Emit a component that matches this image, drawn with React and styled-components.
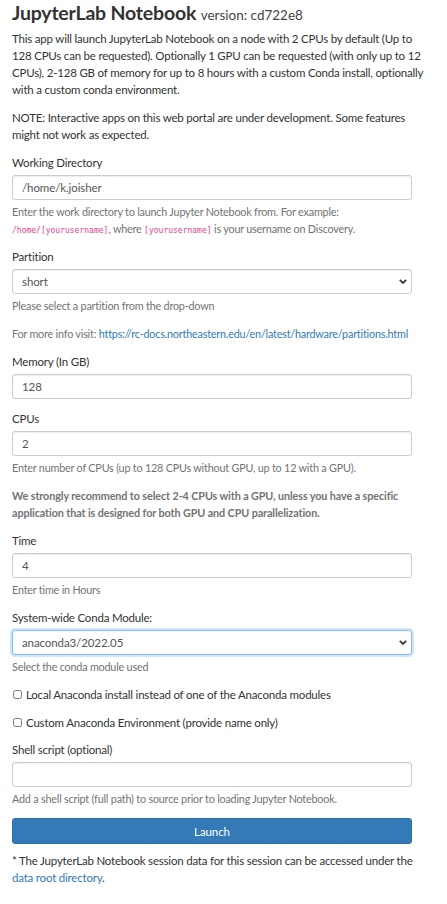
import styled, { createGlobalStyle, css } from "styled-components";

const GlobalStyle = createGlobalStyle`
  html, body { margin: 0; padding: 0; background: #fff; }
  body {
    font-family: Lato, "Open Sans", sans-serif;
    font-size: 11.5px;
    letter-spacing: -0.2px;
    line-height: 17px;
    color: #333;
  }
  * { box-sizing: border-box; }
`;

const Page = styled.div`
  width: 447px;
  padding: 0 35px 20px 12px;
`;

const Title = styled.h3`
  margin: 0 0 2px;
  font-size: 19.5px;
  line-height: 26px;
  font-weight: 700;
  letter-spacing: -0.2px;
  color: #333;
  small {
    font-size: 13.5px;
    font-weight: 400;
    letter-spacing: 0;
    color: #444;
  }
`;

const Para = styled.p`
  margin: 0 0 11px;
  white-space: nowrap;
`;

const Group = styled.div`
  margin-bottom: 11px;
`;

const Label = styled.label`
  display: block;
  margin-bottom: 4px;
`;

const fieldBase = css`
  display: block;
  width: 400px;
  height: 25px;
  padding: 0 9px;
  font-family: inherit;
  font-size: 11.5px;
  letter-spacing: -0.1px;
  color: #555;
  background: #fff;
  border: 1px solid #ccc;
  border-radius: 3px;
  box-shadow: inset 0 1px 1px rgba(0, 0, 0, 0.075);
  outline: none;
`;

const Input = styled.input`
  ${fieldBase}
`;

const SelectWrap = styled.div`
  position: relative;
  width: 400px;
  svg {
    position: absolute;
    right: 5px;
    top: 10px;
    pointer-events: none;
  }
`;

const Select = styled.select`
  ${fieldBase}
  appearance: none;
  ${({ $focus }) =>
    $focus &&
    css`
      border-color: #80bdff;
      box-shadow: 0 0 0 2px rgba(128, 180, 230, 0.35);
    `}
`;

const Help = styled.p`
  margin: ${({ $spaced }) => ($spaced ? "11px" : "3px")} 0 0;
  font-size: 10.8px;
  letter-spacing: ${({ $bold }) => ($bold ? "-0.1px" : "-0.2px")};
  white-space: nowrap;
  color: #737373;
  font-weight: ${({ $bold }) => ($bold ? 700 : 400)};
  a {
    color: #337ab7;
    text-decoration: none;
  }
`;

const Code = styled.code`
  font-family: "DejaVu Sans Mono", "Liberation Mono", monospace;
  font-size: 8px;
  line-height: 1;
  letter-spacing: 0;
  color: #e83e8c;
`;

const CheckRow = styled.label`
  display: flex;
  align-items: center;
  gap: 4px;
  margin-bottom: 10.5px;
  input {
    margin: 0 0 0 1px;
    width: 9px;
    height: 9px;
  }
`;

const Button = styled.button`
  display: block;
  width: 400px;
  height: 26px;
  margin-top: 7px;
  font-family: inherit;
  font-size: 11.5px;
  letter-spacing: -0.1px;
  color: #fff;
  background: #337ab7;
  border: 1px solid #2e6da4;
  border-radius: 3px;
`;

const Footer = styled.p`
  margin: 8px 0 0;
  white-space: nowrap;
  a {
    color: #337ab7;
    text-decoration: none;
  }
`;

function Chevron() {
  return (
    <svg width="8" height="5" viewBox="0 0 8 5">
      <path d="M0.8 0.8 L4 4 L7.2 0.8" fill="none" stroke="#343a40" strokeWidth="1.8" />
    </svg>
  );
}

export default function App() {
  return (
    <>
      <GlobalStyle />
      <Page>
        <Title>
          JupyterLab Notebook <small>version: cd722e8</small>
        </Title>
        <Para>
          This app will launch JupyterLab Notebook on a node with 2 CPUs by default (Up to
          <br />
          128 CPUs can be requested). Optionally 1 GPU can be requested (with only up to 12
          <br />
          CPUs), 2-128 GB of memory for up to 8 hours with a custom Conda install, optionally
          <br />
          with a custom conda environment.
        </Para>
        <Para>
          NOTE: Interactive apps on this web portal are under development. Some features
          <br />
          might not work as expected.
        </Para>

        <Group>
          <Label>Working Directory</Label>
          <Input defaultValue="/home/k.joisher" />
          <Help>
            Enter the work directory to launch Jupyter Notebook from. For example:
            <br />
            <Code>/home/[yourusername]</Code>, where <Code>[yourusername]</Code> is your username
            on Discovery.
          </Help>
        </Group>

        <Group>
          <Label>Partition</Label>
          <SelectWrap>
            <Select defaultValue="short">
              <option>short</option>
            </Select>
            <Chevron />
          </SelectWrap>
          <Help>Please select a partition from the drop-down</Help>
          <Help $spaced>
            For more info visit:{" "}
            <a href="#">https://rc-docs.northeastern.edu/en/latest/hardware/partitions.html</a>
          </Help>
        </Group>

        <Group>
          <Label>Memory (In GB)</Label>
          <Input defaultValue="128" />
        </Group>

        <Group>
          <Label>CPUs</Label>
          <Input defaultValue="2" />
          <Help>Enter number of CPUs (up to 128 CPUs without GPU, up to 12 with a GPU).</Help>
          <Help $spaced $bold>
            We strongly recommend to select 2-4 CPUs with a GPU, unless you have a specific
            <br />
            application that is designed for both GPU and CPU parallelization.
          </Help>
        </Group>

        <Group>
          <Label>Time</Label>
          <Input defaultValue="4" />
          <Help>Enter time in Hours</Help>
        </Group>

        <Group>
          <Label>System-wide Conda Module:</Label>
          <SelectWrap>
            <Select $focus defaultValue="anaconda3/2022.05">
              <option>anaconda3/2022.05</option>
            </Select>
            <Chevron />
          </SelectWrap>
          <Help>Select the conda module used</Help>
        </Group>

        <CheckRow>
          <input type="checkbox" />
          Local Anaconda install instead of one of the Anaconda modules
        </CheckRow>
        <CheckRow>
          <input type="checkbox" />
          Custom Anaconda Environment (provide name only)
        </CheckRow>

        <Group>
          <Label>Shell script (optional)</Label>
          <Input />
          <Help>Add a shell script (full path) to source prior to loading Jupyter Notebook.</Help>
        </Group>

        <Button>Launch</Button>
        <Footer>
          * The JupyterLab Notebook session data for this session can be accessed under the
          <br />
          <a href="#">data root directory</a>.
        </Footer>
      </Page>
    </>
  );
}
